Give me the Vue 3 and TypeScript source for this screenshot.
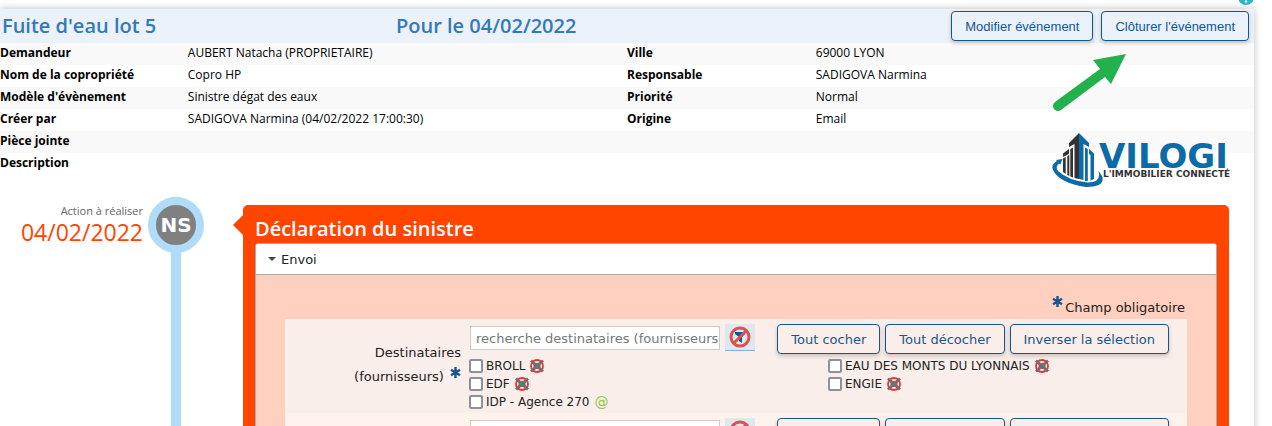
<script setup lang="ts">
import { ref } from 'vue'

interface Detail {
  label: string
  value: string
  label2?: string
  value2?: string
}

interface Recipient {
  id: string
  name: string
  email: boolean
}

const details: Detail[] = [
  { label: 'Demandeur', value: 'AUBERT Natacha (PROPRIETAIRE)', label2: 'Ville', value2: '69000 LYON' },
  { label: 'Nom de la copropriété', value: 'Copro HP', label2: 'Responsable', value2: 'SADIGOVA Narmina' },
  { label: "Modèle d'évènement", value: 'Sinistre dégat des eaux', label2: 'Priorité', value2: 'Normal' },
  { label: 'Créer par', value: 'SADIGOVA Narmina (04/02/2022 17:00:30)', label2: 'Origine', value2: 'Email' },
  { label: 'Pièce jointe', value: '' },
  { label: 'Description', value: '' },
]

const recipients: Recipient[] = [
  { id: 'broll', name: 'BROLL', email: false },
  { id: 'eau', name: 'EAU DES MONTS DU LYONNAIS', email: false },
  { id: 'edf', name: 'EDF', email: false },
  { id: 'engie', name: 'ENGIE', email: false },
  { id: 'idp', name: 'IDP - Agence 270', email: true },
]

const groups = [
  { id: 'suppliers', label: 'Destinataires (fournisseurs)', placeholder: 'recherche destinataires (fournisseurs)', items: recipients },
  { id: 'others', label: '', placeholder: '', items: [] as Recipient[] },
]

const selected = ref<string[]>([])
const open = ref(true)

function checkAll(items: Recipient[]) {
  selected.value = items.map((r) => r.id)
}
function uncheckAll() {
  selected.value = []
}
function invert(items: Recipient[]) {
  selected.value = items.filter((r) => !selected.value.includes(r.id)).map((r) => r.id)
}
</script>

<template>
  <div class="page">
    <main class="card">
      <a class="help" href="#" aria-label="Aide">
        <svg width="16" height="16" viewBox="0 0 16 16">
          <circle cx="8" cy="8" r="8" fill="#2fb4cc" />
          <path d="M5.5 6a2.5 2.5 0 1 1 3.7 2.2Q8 8.8 8 10" fill="none" stroke="#fff" stroke-width="1.8" />
          <circle cx="8" cy="12.5" r="1.2" fill="#fff" />
        </svg>
      </a>

      <header class="head">
        <h1 class="title">Fuite d'eau lot 5</h1>
        <h2 class="due">Pour le 04/02/2022</h2>
        <div class="actions">
          <button type="button" class="btn btn-head">Modifier événement</button>
          <button type="button" class="btn btn-head">Clôturer l'événement</button>
        </div>
      </header>

      <table class="details">
        <tbody>
          <tr v-for="d in details" :key="d.label">
            <th scope="row">{{ d.label }}</th>
            <td>{{ d.value }}</td>
            <th v-if="d.label2" scope="row">{{ d.label2 }}</th>
            <td v-else></td>
            <td>{{ d.value2 }}</td>
          </tr>
        </tbody>
      </table>

      <svg class="logo" width="180" height="60" viewBox="0 0 180 60" role="img" aria-label="Vilogi">
        <g fill="#333">
          <path d="M27 4L17 14V18L22.5 15V49L27 50Z" />
          <path d="M18.3 20L21 18.500V48.500L18.300 47.500Z" />
          <path d="M17 20L11 24.500V28L17 25Z" />
          <path d="M15.300 27L17.300 26V47L15.300 46ZM11 29.500L13.700 28V45L11 43Z" />
        </g>
        <g fill="#0a6ba8">
          <path d="M27 4L37 14V18L31.500 15V51L27 50Z" />
          <path d="M33 18.500L35.800 20V52H33Z" />
          <path d="M37 20L42 24.500V50L38.500 51.500V26L37 25Z" />
          <path d="M10.500 30L4 31L5 32Q-2 36 1.500 42Q8 54 34 58Q54 58 50 47L46.500 42L47 45Q48 53 36 53.500Q17 52 6 42Q3 38 7 34.500L8.500 35.500Z" />
        </g>
        <text x="47" y="39" class="logo-name">VILOGI</text>
        <text x="51" y="48" class="logo-tag">L'IMMOBILIER CONNECTÉ</text>
      </svg>

      <svg class="pointer" width="80" height="64" viewBox="0 0 80 64" aria-hidden="true">
        <path d="M76 4L43 10L50 19L5 52A5 5 0 0 0 11 60L55 27L61 34Z" fill="#22b14c" />
      </svg>

      <section class="timeline">
        <div class="when">
          <span class="when-label">Action à réaliser</span>
          <time class="when-date" datetime="2022-02-04">04/02/2022</time>
        </div>
        <div class="track">
          <div class="avatar">NS</div>
        </div>
        <article class="panel">
          <h3 class="panel-title">Déclaration du sinistre</h3>
          <div class="box">
            <button type="button" class="toggle" :aria-expanded="open" @click="open = !open">
              <svg width="8" height="4" viewBox="0 0 8 4"><path d="M0 0H8L4 4Z" fill="#444" /></svg>
              Envoi
            </button>
            <div v-if="open" class="box-body">
              <p class="required">
                <svg class="star" width="11" height="11" viewBox="0 0 11 11">
                  <path d="M5.500 0V11M1 2.800L10 8.200M10 2.800L1 8.200" stroke="#15568f" stroke-width="2.400" />
                </svg>
                <span>Champ obligatoire</span>
              </p>
              <div v-for="g in groups" :key="g.id" class="group">
                <label class="group-label" :for="g.id">
                  <span>{{ g.label }}
                    <svg v-if="g.label" class="star star-inline" width="11" height="11" viewBox="0 0 11 11">
                      <path d="M5.500 0V11M1 2.800L10 8.200M10 2.800L1 8.200" stroke="#15568f" stroke-width="2.400" />
                    </svg>
                  </span>
                </label>
                <div class="group-main">
                  <div class="tools">
                    <input :id="g.id" type="text" class="search" :placeholder="g.placeholder" />
                    <button type="button" class="filter" aria-label="Effacer le filtre">
                      <svg width="22" height="22" viewBox="0 0 22 22">
                        <path d="M6 6H16V8L13 11V17L10 15V11L6 8Z" fill="#15568f" />
                        <circle cx="11" cy="11" r="9" fill="none" stroke="#d9534f" stroke-width="3" />
                        <path d="M17 5L5 17" stroke="#d9534f" stroke-width="3" />
                      </svg>
                    </button>
                    <div class="bulk">
                      <button type="button" class="btn" @click="checkAll(g.items)">Tout cocher</button>
                      <button type="button" class="btn" @click="uncheckAll">Tout décocher</button>
                      <button type="button" class="btn" @click="invert(g.items)">Inverser la sélection</button>
                    </div>
                  </div>
                  <div class="choices">
                    <label v-for="r in g.items" :key="r.id" class="choice">
                      <input v-model="selected" type="checkbox" :value="r.id" />
                      <span>{{ r.name }}</span>
                      <span v-if="r.email" class="at">@</span>
                      <svg v-else width="14" height="14" viewBox="0 0 14 14">
                        <circle cx="7" cy="7" r="6" fill="#faeeea" stroke="#ff2a35" stroke-width="1.800" />
                        <rect x="3.500" y="4" width="7" height="6" fill="#707070" />
                        <path d="M1 1.500L13 12.500M13 1.500L1 12.500" stroke="#707070" stroke-width="3" />
                      </svg>
                    </label>
                  </div>
                </div>
              </div>
            </div>
          </div>
        </article>
      </section>
    </main>
  </div>
</template>

<style>
body {
  margin: 0;
  background: #fff;
}
</style>

<style scoped>
.page {
  box-sizing: border-box;
  height: 100vh;
  overflow: hidden;
  padding: 9px 18px 0 0;
  font-family: 'Open Sans', 'Noto Sans', sans-serif;
  font-size: 12px;
  color: #000;
}
.card {
  position: relative;
  min-height: 100%;
  box-shadow: 0 0 8px rgba(0, 0, 0, 0.25);
  background: #fff;
}
.help {
  position: absolute;
  top: -20px;
  right: 0;
  height: 16px;
}
.help svg {
  display: block;
}
.head {
  display: flex;
  align-items: center;
  box-sizing: border-box;
  height: 34px;
  padding: 0 5px 0 2px;
  background: #eaf1f9;
  color: #337ab7;
}
.title,
.due {
  margin: 0;
  font-size: 20px;
  font-weight: 600;
  line-height: 34px;
}
.title {
  width: 394px;
}
.actions {
  display: flex;
  gap: 8px;
  margin-left: auto;
}
.btn {
  box-sizing: border-box;
  height: 30px;
  padding: 0 13px;
  border: 1px solid #15568f;
  border-radius: 4px;
  background: transparent;
  box-shadow: 0 2px 4px rgba(0, 0, 0, 0.2);
  color: #15568f;
  font-family: 'DejaVu Sans', Verdana, sans-serif;
  font-size: 13px;
  white-space: nowrap;
}
.btn-head {
  background: #eaf1f9;
  font-family: 'Liberation Sans', Arial, sans-serif;
}
.group .btn {
  background: #faeeea;
}
.details {
  width: 100%;
  table-layout: fixed;
  border-collapse: collapse;
}
.details th,
.details td {
  height: 22px;
  padding: 0;
  line-height: 20px;
  text-align: left;
  vertical-align: top;
  white-space: nowrap;
}
.details th {
  font-weight: 700;
}
.details tr > :nth-child(odd) {
  width: 15%;
}
.details tr > :nth-child(even) {
  width: 35%;
}
.details tr > :nth-child(n + 3) {
  padding-left: 1px;
}
.details tr:nth-child(odd) {
  background: #f9f9f9;
}
.logo {
  position: absolute;
  top: 120px;
  right: 22px;
}
.logo-name {
  font: 700 34px 'DejaVu Sans', sans-serif;
  fill: #0a6ba8;
}
.logo-tag {
  font: 700 9px 'DejaVu Sans', sans-serif;
  fill: #333;
}
.pointer {
  position: absolute;
  top: 41px;
  right: 124px;
}
.timeline {
  display: flex;
  padding: 22px 25px 0 0;
}
.when {
  display: flex;
  flex-direction: column;
  width: 143px;
  padding-top: 6px;
  text-align: right;
}
.when-label {
  font-size: 11px;
  line-height: 16px;
  color: #666;
}
.when-date {
  font-size: 23px;
  line-height: 26px;
  color: #ff4500;
}
.track {
  display: flex;
  justify-content: center;
  width: 56px;
  margin: 0 39px 0 5px;
  background: linear-gradient(#b0dcf9, #b0dcf9) center / 10px 100% no-repeat;
}
.avatar {
  box-sizing: border-box;
  width: 56px;
  height: 56px;
  border: 8px solid #b0dcf9;
  border-radius: 50%;
  background: #808080;
  color: #fff;
  font: 700 20px/40px 'DejaVu Sans', sans-serif;
  text-align: center;
}
.panel {
  position: relative;
  flex: 1;
  margin-top: 8px;
  padding: 10px 12px 12px;
  border-radius: 5px;
  background: #ff4500;
}
.panel::before {
  content: '';
  position: absolute;
  top: 10px;
  left: -10px;
  border: solid transparent;
  border-width: 10px 10px 10px 0;
  border-right-color: #ff4500;
}
.panel-title {
  margin: 0;
  color: #fff;
  font-size: 20px;
  font-weight: 600;
  line-height: 28px;
}
.box {
  border: 1px solid #aaa;
  border-radius: 3px 3px 0 0;
  background: #ffcfbf;
  color: #222;
  font-family: 'DejaVu Sans', Verdana, sans-serif;
  font-size: 13px;
}
.toggle {
  display: flex;
  align-items: center;
  gap: 5px;
  width: 100%;
  height: 31px;
  padding: 0 12px;
  border: 0;
  border-bottom: 1px solid #aaa;
  border-radius: 2px 2px 0 0;
  background: #fff;
  color: #222;
  font: inherit;
}
.box-body {
  padding: 21px 29px;
}
.required {
  display: flex;
  align-items: flex-start;
  justify-content: flex-end;
  gap: 2px;
  margin: 0;
  padding-right: 2px;
  line-height: 24px;
}
.group {
  display: flex;
  box-sizing: border-box;
  min-height: 94px;
  padding-top: 5px;
  background: #faeeea;
}
.required + .group {
  margin-top: -1px;
}
.group:nth-child(odd) {
  background: #fff2ed;
}
.group-label {
  display: flex;
  align-items: center;
  justify-content: flex-end;
  box-sizing: border-box;
  width: 180px;
  padding: 0 4px 8px 60px;
  line-height: 24px;
  text-align: right;
}
.star-inline {
  margin-left: 2px;
  vertical-align: 3px;
}
.group-main {
  flex: 1;
  padding-left: 4px;
}
.tools {
  display: flex;
  align-items: flex-start;
  padding-right: 18px;
}
.search {
  box-sizing: border-box;
  width: 250px;
  height: 24px;
  margin: 2px 5px 0 1px;
  padding: 0 0 0 5px;
  border: 1px solid #ccc;
  background: #fff;
  font: inherit;
}
.search::placeholder {
  color: #777;
  opacity: 1;
}
.filter {
  display: flex;
  align-items: center;
  justify-content: center;
  width: 30px;
  height: 27px;
  padding: 0;
  border: 0;
  border-bottom: 1px solid #7fb2e8;
  background: #dfe6ec;
}
.bulk {
  display: flex;
  gap: 5px;
  margin-left: auto;
}
.choices {
  display: grid;
  grid-template-columns: 1fr 1fr;
  padding-top: 3px;
  font-size: 12px;
}
.choice {
  display: flex;
  align-items: center;
  gap: 5px;
  height: 18px;
  white-space: nowrap;
}
.choice input {
  appearance: none;
  box-sizing: border-box;
  width: 14px;
  height: 14px;
  margin: 0 -2px 0 0;
  border: 2px solid #8f8f9d;
  border-radius: 2px;
  background: #fff;
}
.choice input:checked {
  background: #15568f;
}
.at {
  color: #8cc63f;
  font-size: 14px;
}
</style>
